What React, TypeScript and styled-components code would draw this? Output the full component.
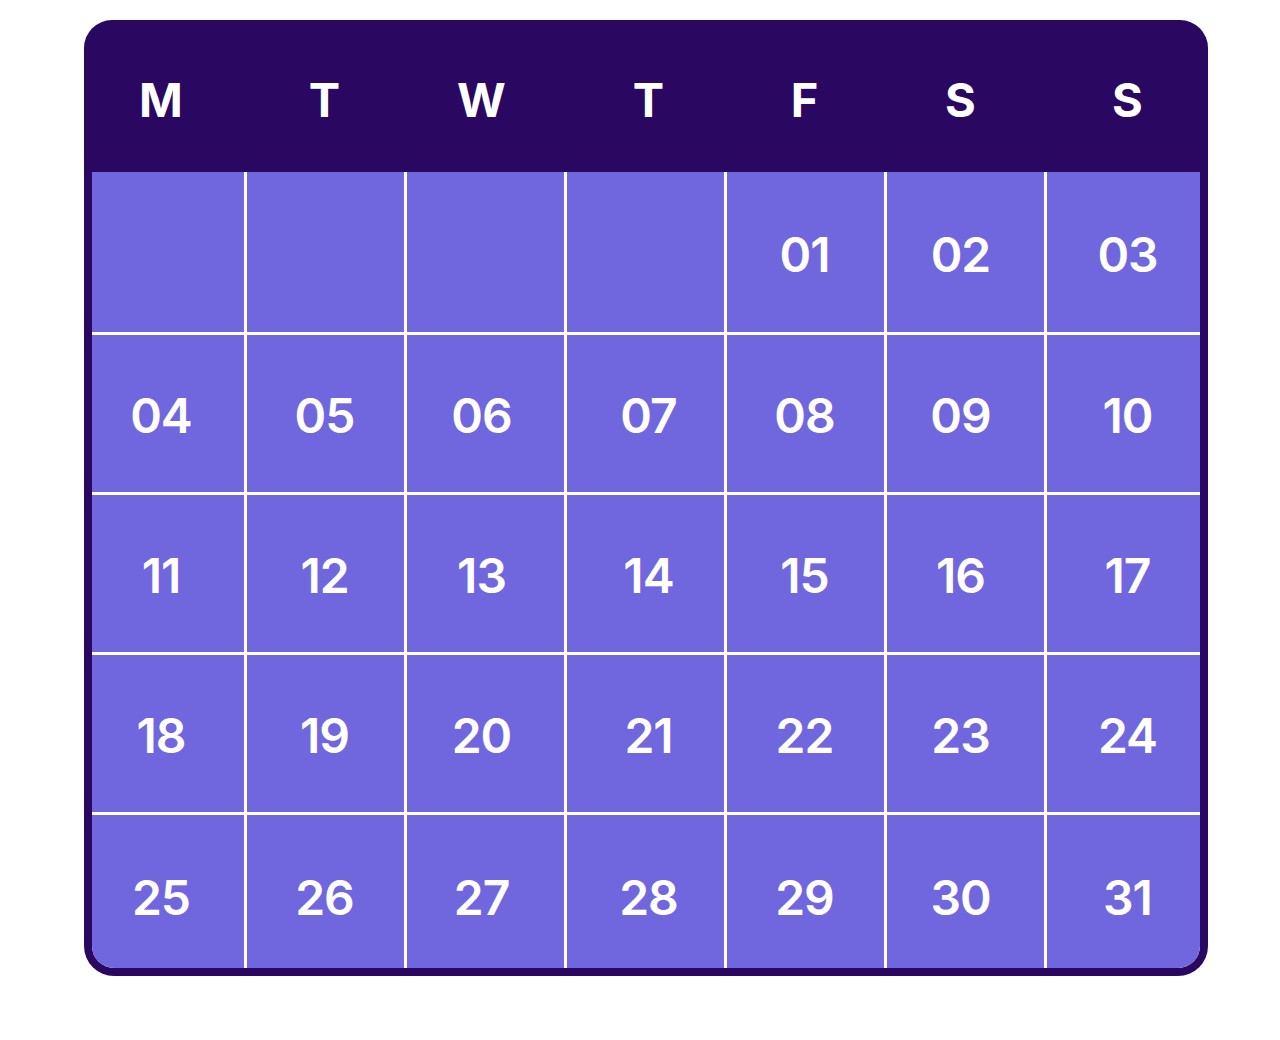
import styled, { createGlobalStyle } from "styled-components";

const GlobalStyle = createGlobalStyle`
  body {
    margin: 0;
    background: #ffffff;
    font-family: Inter, "Noto Sans", sans-serif;
  }
`;

const COLUMNS = "152px 157px 157px 157px 157px 157px 153px";
// small horizontal nudges so the labels sit where the design has them
const SHIFT = [-7, -1, -4, 3, -1, -5, 4];

const Page = styled.div`
  width: 1280px;
  height: 1040px;
  padding: 20px 0 0 84px;
  box-sizing: border-box;
`;

const Card = styled.div`
  width: 1124px;
  background-color: #2a0760;
  border-radius: 28px 28px 30px 30px;
  padding: 0 8px 8px;
  box-sizing: border-box;
`;

const Header = styled.div`
  display: grid;
  grid-template-columns: ${COLUMNS};
  column-gap: 3px;
  height: 152px;
  align-items: center;
`;

const DayName = styled.div<{ $shift: number }>`
  color: #ffffff;
  font-size: 47px;
  font-weight: 700;
  text-align: center;
  padding-top: 6px;
  transform: translateX(${(p) => p.$shift}px);
`;

const Body = styled.div`
  display: grid;
  grid-template-columns: ${COLUMNS};
  grid-template-rows: 160px 157px 157px 157px 153px;
  gap: 3px;
  background-color: #ffffff;
  border-radius: 0 0 22px 22px;
  overflow: hidden;
`;

const Cell = styled.div<{ $shift: number; $last: boolean }>`
  display: flex;
  align-items: center;
  justify-content: center;
  background-color: #7067de;
  color: #ffffff;
  font-size: 48px;
  font-weight: 600;
  letter-spacing: -1px;
  padding-top: ${(p) => (p.$last ? 12 : 4)}px;
  span {
    transform: translateX(${(p) => p.$shift}px);
  }
`;

const days = ["M", "T", "W", "T", "F", "S", "S"];
const leading = 4;
const cells: (number | null)[] = [
  ...Array(leading).fill(null),
  ...Array.from({ length: 31 }, (_, i) => i + 1),
];

const App = () => {
  return (
    <>
      <GlobalStyle />
      <Page>
        <Card>
          <Header>
            {days.map((d, i) => (
              <DayName key={i} $shift={SHIFT[i]}>
                {d}
              </DayName>
            ))}
          </Header>
          <Body>
            {cells.map((n, i) => (
              <Cell key={i} $shift={SHIFT[i % 7]} $last={i >= 28}>
                <span>{n ? String(n).padStart(2, "0") : ""}</span>
              </Cell>
            ))}
          </Body>
        </Card>
      </Page>
    </>
  );
};

export default App;
